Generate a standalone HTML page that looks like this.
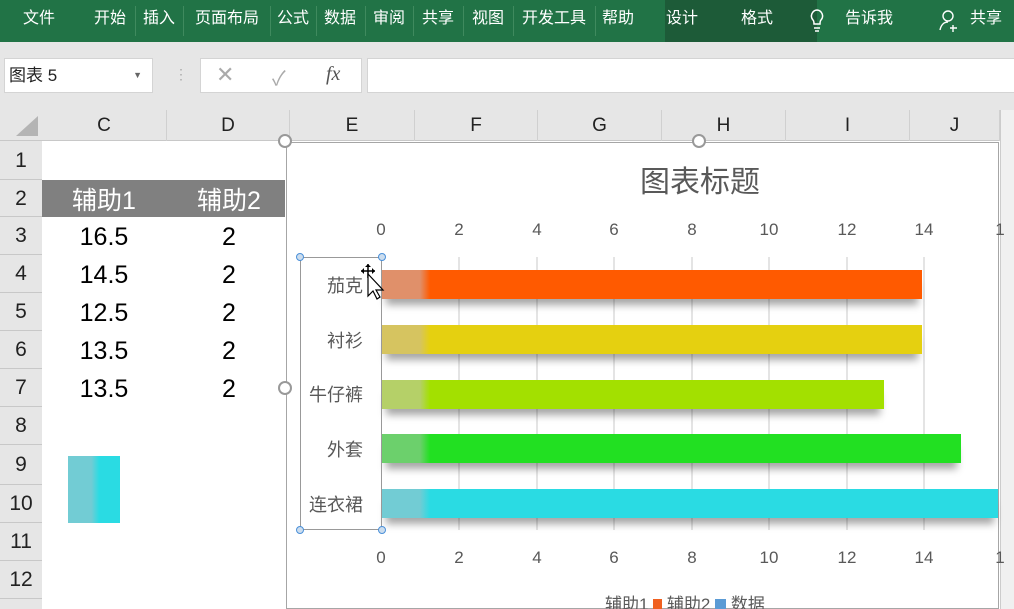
<!DOCTYPE html><html><head><meta charset="utf-8"><style>
*{margin:0;padding:0;box-sizing:border-box}
html,body{width:1014px;height:609px;overflow:hidden}
body{position:relative;background:#e6e6e6;font-family:"Liberation Sans","Noto Sans CJK SC",sans-serif}
.a{position:absolute}
.tab{position:absolute;top:0;height:42px;line-height:38px;color:#fff;font-size:16px;text-align:center}
.sep{position:absolute;top:6px;width:1px;height:30px;background:#3f8a5e}
.ch{position:absolute;top:110px;height:31px;line-height:31px;text-align:center;font-size:19px;color:#222;border-right:1px solid #d0d0d0}
.rh{position:absolute;left:0;width:42px;text-align:center;font-size:21px;color:#222;border-bottom:1px solid #c8c8c8}
.v{position:absolute;font-size:25px;color:#000;text-align:center;width:124px}
.tk{position:absolute;font-size:17px;color:#595959;width:30px;text-align:center}
.gl{position:absolute;top:257px;width:2px;height:273px;background:#e4e4e4}
.bar{position:absolute;height:29px;box-shadow:0 10px 8px -4px rgba(0,0,0,.35)}
.cl{position:absolute;left:296px;width:67px;text-align:right;font-size:18px;color:#595959}
</style></head><body>
<div class="a" style="left:0;top:0;width:1014px;height:42px;background:#217346"></div>
<div class="a" style="left:665px;top:0;width:152px;height:42px;background:#1d5b38"></div>
<div class="tab" style="left:14px;width:50px">文件</div>
<div class="tab" style="left:88px;width:44px">开始</div><div class="sep" style="left:135px"></div>
<div class="tab" style="left:137px;width:44px">插入</div><div class="sep" style="left:183px"></div>
<div class="tab" style="left:186px;width:82px">页面布局</div><div class="sep" style="left:270px"></div>
<div class="tab" style="left:272px;width:42px">公式</div><div class="sep" style="left:316px"></div>
<div class="tab" style="left:318px;width:44px">数据</div><div class="sep" style="left:365px"></div>
<div class="tab" style="left:367px;width:44px">审阅</div><div class="sep" style="left:413px"></div>
<div class="tab" style="left:415px;width:46px">共享</div><div class="sep" style="left:463px"></div>
<div class="tab" style="left:465px;width:46px">视图</div><div class="sep" style="left:513px"></div>
<div class="tab" style="left:515px;width:78px">开发工具</div><div class="sep" style="left:595px"></div>
<div class="tab" style="left:596px;width:44px">帮助</div>
<div class="tab" style="left:660px;width:44px">设计</div>
<div class="tab" style="left:735px;width:44px">格式</div>
<svg class="a" style="left:808px;top:8px" width="18" height="26"><path d="M9 2a6 6 0 0 0-4 10c1 1 1 3 1 4h6c0-1 0-3 1-4A6 6 0 0 0 9 2zM6 20h6M7 23h4" stroke="#fff" stroke-width="1.5" fill="none"/></svg>
<div class="tab" style="left:838px;width:62px">告诉我</div>
<svg class="a" style="left:938px;top:9px" width="22" height="24"><circle cx="10" cy="7" r="5" stroke="#fff" stroke-width="1.4" fill="none"/><path d="M2 21c1-5 4-8 8-8M15 16v7M12 19h7" stroke="#fff" stroke-width="1.4" fill="none"/></svg>
<div class="tab" style="left:964px;width:44px">共享</div>
<div class="a" style="left:4px;top:58px;width:149px;height:35px;background:#fff;border:1px solid #d4d4d4;font-size:17px;line-height:33px;padding-left:4px;color:#222">图表 5<span style="position:absolute;right:10px;font-size:9px;color:#666">▼</span></div>
<div class="a" style="left:174px;top:66px;color:#aaa;font-size:14px">⋮</div>
<div class="a" style="left:200px;top:58px;width:162px;height:35px;background:#fff;border:1px solid #d4d4d4"></div>
<div class="a" style="left:216px;top:62px;font-size:22px;color:#aaa">✕</div>
<div class="a" style="left:272px;top:62px;font-size:20px;color:#aaa">✓</div>
<div class="a" style="left:326px;top:63px;font-size:20px;color:#555;font-style:italic;font-family:'Liberation Serif',serif">fx</div>
<div class="a" style="left:367px;top:58px;width:650px;height:35px;background:#fff;border:1px solid #d4d4d4"></div>
<div class="a" style="left:0;top:110px;width:1014px;height:31px;background:#e6e6e6;border-bottom:1px solid #c8c8c8"></div>
<svg class="a" style="left:14px;top:114px" width="26" height="24"><path d="M24 2V22H2Z" fill="#b4b4b4"/></svg>
<div class="ch" style="left:42px;width:125px">C</div><div class="ch" style="left:167px;width:123px">D</div><div class="ch" style="left:290px;width:125px">E</div><div class="ch" style="left:415px;width:123px">F</div><div class="ch" style="left:538px;width:124px">G</div><div class="ch" style="left:662px;width:124px">H</div><div class="ch" style="left:786px;width:124px">I</div><div class="ch" style="left:910px;width:90px">J</div>
<div class="a" style="left:42px;top:141px;width:960px;height:468px;background:#fff"></div>
<div class="a" style="left:0;top:141px;width:42px;height:468px;background:#e6e6e6"></div>
<div class="rh" style="top:142px;height:38px;line-height:38px">1</div><div class="rh" style="top:180px;height:37px;line-height:37px">2</div><div class="rh" style="top:217px;height:38px;line-height:38px">3</div><div class="rh" style="top:255px;height:38px;line-height:38px">4</div><div class="rh" style="top:293px;height:38px;line-height:38px">5</div><div class="rh" style="top:331px;height:38px;line-height:38px">6</div><div class="rh" style="top:369px;height:38px;line-height:38px">7</div><div class="rh" style="top:407px;height:38px;line-height:38px">8</div><div class="rh" style="top:445px;height:40px;line-height:40px">9</div><div class="rh" style="top:485px;height:38px;line-height:38px">10</div><div class="rh" style="top:523px;height:38px;line-height:38px">11</div><div class="rh" style="top:561px;height:38px;line-height:38px">12</div>
<div class="a" style="left:42px;top:180px;width:243px;height:37px;background:#808080"></div>
<div class="v" style="left:42px;top:181px;color:#fff">辅助1</div><div class="v" style="left:167px;top:181px;color:#fff">辅助2</div>
<div class="v" style="left:42px;top:223px">16.5</div><div class="v" style="left:167px;top:223px">2</div>
<div class="v" style="left:42px;top:261px">14.5</div><div class="v" style="left:167px;top:261px">2</div>
<div class="v" style="left:42px;top:299px">12.5</div><div class="v" style="left:167px;top:299px">2</div>
<div class="v" style="left:42px;top:337px">13.5</div><div class="v" style="left:167px;top:337px">2</div>
<div class="v" style="left:42px;top:375px">13.5</div><div class="v" style="left:167px;top:375px">2</div>
<div class="a" style="left:68px;top:456px;width:52px;height:67px;background:linear-gradient(90deg,#72ccd4 0,#72ccd4 45%,#2adbe3 60%)"></div>
<div class="a" style="left:286px;top:142px;width:713px;height:467px;border:1px solid #a6a6a6;background:#fff"></div>
<div class="a" style="left:278px;top:134px;width:14px;height:14px;border:2px solid #999;border-radius:50%;background:#fff"></div>
<div class="a" style="left:692px;top:134px;width:14px;height:14px;border:2px solid #999;border-radius:50%;background:#fff"></div>
<div class="a" style="left:278px;top:381px;width:14px;height:14px;border:2px solid #999;border-radius:50%;background:#fff"></div>
<div class="a" style="left:1000px;top:110px;width:14px;height:499px;background:#f0f0f0;border-left:1px solid #ccc"></div>
<div class="a" style="left:560px;top:157px;width:280px;text-align:center;font-size:30px;color:#595959">图表标题</div>
<div class="gl" style="left:458px"></div><div class="gl" style="left:536px"></div><div class="gl" style="left:613px"></div><div class="gl" style="left:691px"></div><div class="gl" style="left:768px"></div><div class="gl" style="left:846px"></div><div class="gl" style="left:923px"></div>
<div class="tk" style="left:366px;top:220px">0</div><div class="tk" style="left:444px;top:220px">2</div><div class="tk" style="left:522px;top:220px">4</div><div class="tk" style="left:599px;top:220px">6</div><div class="tk" style="left:677px;top:220px">8</div><div class="tk" style="left:754px;top:220px">10</div><div class="tk" style="left:832px;top:220px">12</div><div class="tk" style="left:909px;top:220px">14</div><div class="tk" style="left:985px;top:220px">1</div>
<div class="tk" style="left:366px;top:548px">0</div><div class="tk" style="left:444px;top:548px">2</div><div class="tk" style="left:522px;top:548px">4</div><div class="tk" style="left:599px;top:548px">6</div><div class="tk" style="left:677px;top:548px">8</div><div class="tk" style="left:754px;top:548px">10</div><div class="tk" style="left:832px;top:548px">12</div><div class="tk" style="left:909px;top:548px">14</div><div class="tk" style="left:985px;top:548px">1</div>
<div class="bar" style="left:382px;top:270px;width:540px;background:linear-gradient(90deg,#e0906a 0,#e0906a 38px,#ff5a00 48px)"></div>
<div class="bar" style="left:382px;top:325px;width:540px;background:linear-gradient(90deg,#d6c460 0,#d6c460 38px,#e5d010 48px)"></div>
<div class="bar" style="left:382px;top:380px;width:502px;background:linear-gradient(90deg,#b5d068 0,#b5d068 38px,#a3e000 48px)"></div>
<div class="bar" style="left:382px;top:434px;width:579px;background:linear-gradient(90deg,#6cd06c 0,#6cd06c 38px,#22e022 48px)"></div>
<div class="bar" style="left:382px;top:489px;width:616px;background:linear-gradient(90deg,#72ccd4 0,#72ccd4 38px,#2adbe3 48px)"></div>
<div class="a" style="left:300px;top:257px;width:82px;height:273px;border:1px solid #999"></div>
<div class="a" style="left:296px;top:253px;width:8px;height:8px;border:1px solid #4a90d9;border-radius:50%;background:#cde"></div>
<div class="a" style="left:378px;top:253px;width:8px;height:8px;border:1px solid #4a90d9;border-radius:50%;background:#cde"></div>
<div class="a" style="left:296px;top:526px;width:8px;height:8px;border:1px solid #4a90d9;border-radius:50%;background:#cde"></div>
<div class="a" style="left:378px;top:526px;width:8px;height:8px;border:1px solid #4a90d9;border-radius:50%;background:#cde"></div>
<div class="cl" style="top:272px">茄克</div><div class="cl" style="top:327px">衬衫</div><div class="cl" style="top:381px">牛仔裤</div><div class="cl" style="top:436px">外套</div><div class="cl" style="top:491px">连衣裙</div>
<svg class="a" style="left:352px;top:262px" width="36" height="40"><path d="M16 2v14M9 9h14" stroke="#000" stroke-width="1.5"/><path d="M16 2l-3 3h6zM9 9l3-3v6zM23 9l-3-3v6z" fill="#000"/><path d="M16 12v22l5-5 4 8 3-2-4-7h7z" fill="#fff" stroke="#000" stroke-width="1.2"/></svg>
<div class="a" style="left:605px;top:590px;font-size:17px;color:#595959">辅助1 <span style="display:inline-block;width:9px;height:11px;background:#f06020"></span> 辅助2 <span style="display:inline-block;width:11px;height:11px;background:#5b9bd5"></span> 数据</div>
</body></html>
